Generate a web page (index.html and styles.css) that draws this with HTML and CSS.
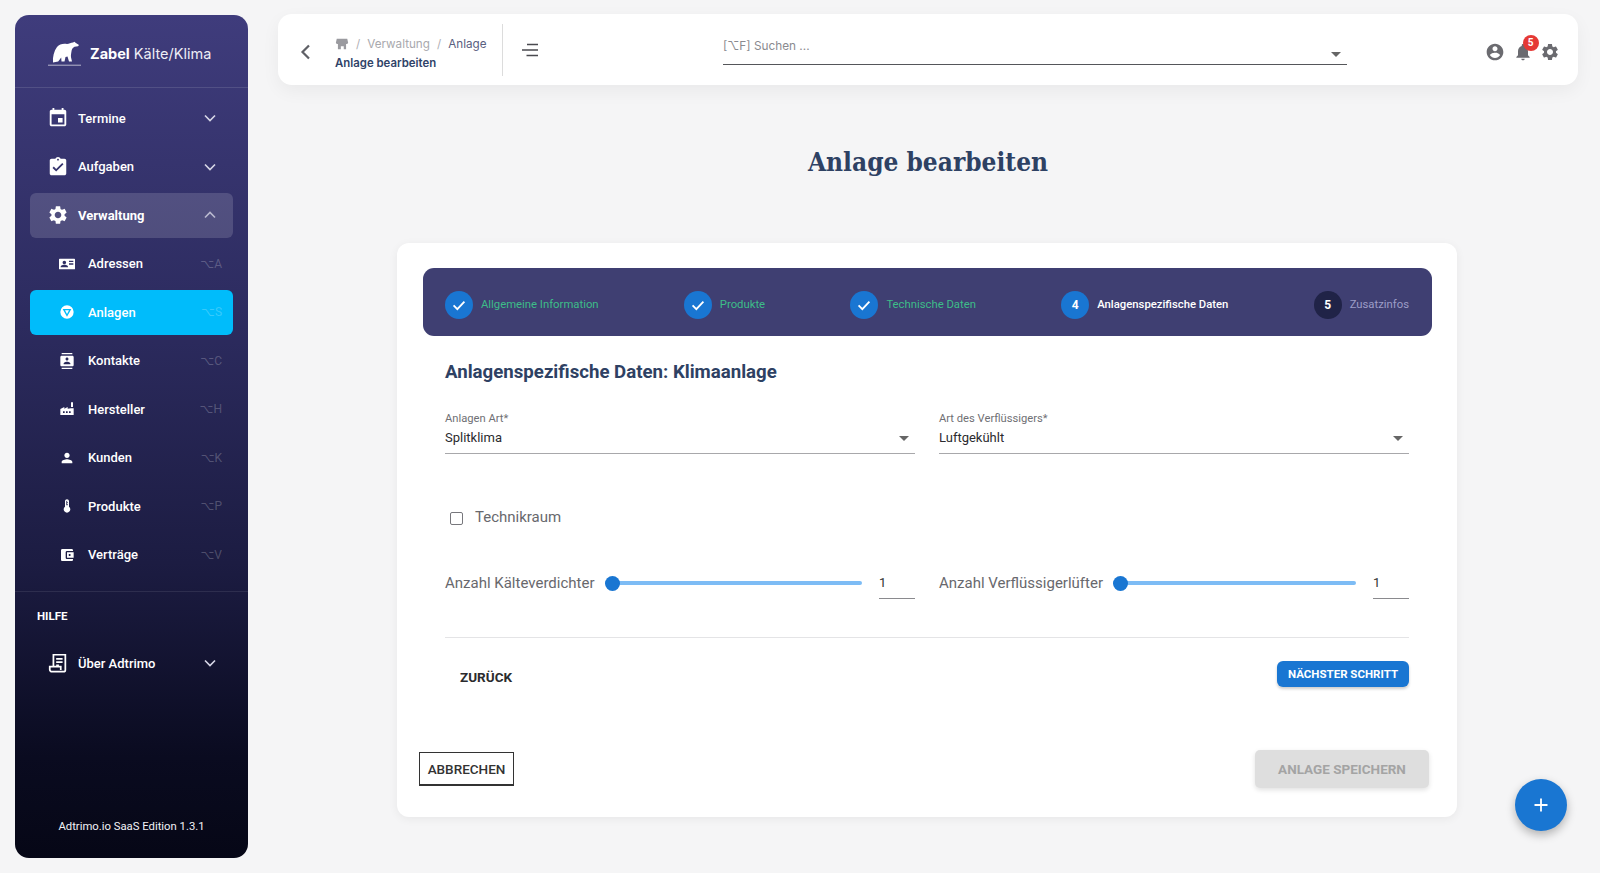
FILE: index.html
```html
<!DOCTYPE html>
<html lang="de">
<head>
<meta charset="utf-8">
<title>Anlage bearbeiten</title>
<link rel="stylesheet" href="styles.css">
</head>
<body>
<svg class="sprite" aria-hidden="true">
  <symbol id="chev-down" viewBox="0 0 24 24"><path d="M6 9l6 6 6-6" fill="none" stroke="currentColor" stroke-width="2"/></symbol>
  <symbol id="chev-up" viewBox="0 0 24 24"><path d="M6 15l6-6 6 6" fill="none" stroke="currentColor" stroke-width="2"/></symbol>
  <symbol id="gear" viewBox="0 0 24 24"><path d="M19.14 12.94c.04-.3.06-.61.06-.94 0-.32-.02-.64-.07-.94l2.03-1.58c.18-.14.23-.41.12-.61l-1.92-3.32c-.12-.22-.37-.29-.59-.22l-2.39.96c-.5-.38-1.03-.7-1.62-.94l-.36-2.54c-.04-.24-.24-.41-.48-.41h-3.84c-.24 0-.43.17-.47.41l-.36 2.54c-.59.24-1.13.57-1.62.94l-2.39-.96c-.22-.08-.47 0-.59.22L2.74 8.87c-.12.21-.08.47.12.61l2.03 1.58c-.05.3-.09.63-.09.94s.02.64.07.94l-2.03 1.58c-.18.14-.23.41-.12.61l1.92 3.32c.12.22.37.29.59.22l2.39-.96c.5.38 1.03.7 1.62.94l.36 2.54c.05.24.24.41.48.41h3.84c.24 0 .44-.17.47-.41l.36-2.54c.59-.24 1.13-.56 1.62-.94l2.39.96c.22.08.47 0 .59-.22l1.92-3.32c.12-.22.07-.47-.12-.61l-2.01-1.58zM12 15.6c-1.98 0-3.6-1.62-3.6-3.6s1.62-3.6 3.6-3.6 3.6 1.62 3.6 3.6-1.62 3.6-3.6 3.6z"/></symbol>
  <symbol id="check" viewBox="0 0 24 24"><path d="M5.5 12.5l4.5 4.5 8.5-9" fill="none" stroke="currentColor" stroke-width="2.2"/></symbol>
</svg>

<div class="app">
  <aside class="sidebar">
    <div class="brand">
      <svg class="bear" viewBox="0 0 34 26"><path d="M5 22.500C4.500 17 6 11 9 7c2.500-3 6-3.500 10-3 2-.3 4-1.500 6-1.500l1.500-.8 1 1 3.500 2.300-1 1.200-3.500.5c-1.500 1-2.500 2-2.800 3.500-.4 2.500-1 5-.7 7l1 4.300h-3l-1.500-5-2 .5-1 4.500h-3l-.3-4-3 4z" fill="#fff"/><path d="M0 25.200h33" stroke="#fff" stroke-width=".8" opacity=".8"/></svg>
      <span class="brand-name"><b>Zabel</b> Kälte/Klima</span>
    </div>
    <nav class="menu">
      <a class="item top"><svg class="ico" viewBox="0 0 24 24"><path d="M17 12h-5v5h5v-5zM16 1v2H8V1H6v2H5c-1.11 0-1.99.9-1.99 2L3 19c0 1.1.89 2 2 2h14c1.1 0 2-.9 2-2V5c0-1.1-.9-2-2-2h-1V1h-2zm3 18H5V8h14v11z"/></svg><span class="lbl">Termine</span><svg class="chev"><use href="#chev-down"/></svg></a>
      <a class="item top"><svg class="ico" viewBox="0 0 24 24"><path d="M19 3h-4.18C14.4 1.84 13.3 1 12 1c-1.3 0-2.4.84-2.82 2H5c-1.1 0-2 .9-2 2v14c0 1.1.9 2 2 2h14c1.1 0 2-.9 2-2V5c0-1.1-.9-2-2-2zm-7 0c.55 0 1 .45 1 1s-.45 1-1 1-1-.45-1-1 .45-1 1-1zm-2 14l-4-4 1.41-1.41L10 14.17l6.59-6.59L18 9l-8 8z"/></svg><span class="lbl">Aufgaben</span><svg class="chev"><use href="#chev-down"/></svg></a>
      <a class="item top open"><svg class="ico"><use href="#gear"/></svg><span class="lbl">Verwaltung</span><svg class="chev"><use href="#chev-up"/></svg></a>
      <a class="item sub"><svg class="ico" viewBox="0 0 24 24"><path fill-rule="evenodd" d="M1 4h22c.6 0 1 .4 1 1v14c0 .6-.4 1-1 1H1c-.6 0-1-.4-1-1V5c0-.6.4-1 1-1zm7 3a2.700 2.700 0 100 5.400A2.700 2.700 0 008 7zm-5.500 10h11v-1c0-2-3.700-2.700-5.500-2.700S2.500 14 2.500 16v1zM15 7v2h6.500V7H15zm0 4v2h6.500v-2H15z"/></svg><span class="lbl">Adressen</span><span class="key">⌥A</span></a>
      <a class="item sub active"><svg class="ico" viewBox="0 0 24 24"><path fill-rule="evenodd" d="M12 2a10 10 0 110 20 10 10 0 010-20zM5.500 7.500L12 19l6.500-11.500zM9 9.500h6L12 15z"/></svg><span class="lbl">Anlagen</span><span class="key">⌥S</span></a>
      <a class="item sub"><svg class="ico" viewBox="0 0 24 24"><path d="M20 0H4v2h16V0zM4 24h16v-2H4v2zM20 4H4c-1.100 0-2 .9-2 2v12c0 1.100.9 2 2 2h16c1.100 0 2-.9 2-2V6c0-1.100-.9-2-2-2zm-8 2.750c1.240 0 2.250 1.010 2.250 2.250s-1.010 2.250-2.250 2.250S9.750 10.240 9.750 9 10.760 6.750 12 6.750zM17 17H7v-1.500c0-1.670 3.330-2.500 5-2.500s5 .83 5 2.500V17z"/></svg><span class="lbl">Kontakte</span><span class="key">⌥C</span></a>
      <a class="item sub"><svg class="ico" viewBox="0 0 24 24"><path fill-rule="evenodd" d="M18 2h3v7h-3zM2 12l6-3v2.500L13 9v2.500l5-.5h4v10H2zm4 3.500v2.500h2.500v-2.500zm4.500 0v2.500H13v-2.500zm4.500 0v2.500h2.500v-2.500z"/></svg><span class="lbl">Hersteller</span><span class="key">⌥H</span></a>
      <a class="item sub"><svg class="ico" viewBox="0 0 24 24"><path d="M12 12c2.210 0 4-1.790 4-4s-1.790-4-4-4-4 1.790-4 4 1.790 4 4 4zm0 2c-2.670 0-8 1.340-8 4v2h16v-2c0-2.660-5.330-4-8-4z"/></svg><span class="lbl">Kunden</span><span class="key">⌥K</span></a>
      <a class="item sub"><svg class="ico" viewBox="0 0 24 24"><path d="M15 13V5c0-1.660-1.340-3-3-3S9 3.340 9 5v8c-1.210.91-2 2.370-2 4 0 2.760 2.240 5 5 5s5-2.240 5-5c0-1.630-.79-3.090-2-4zm-4-8c0-.55.45-1 1-1s1 .45 1 1h-1v1h1v2h-1v1h1v2h-2V5z"/></svg><span class="lbl">Produkte</span><span class="key">⌥P</span></a>
      <a class="item sub"><svg class="ico" viewBox="0 0 24 24"><path d="M21 18v1c0 1.100-.9 2-2 2H5c-1.110 0-2-.9-2-2V5c0-1.100.89-2 2-2h14c1.100 0 2 .9 2 2v1h-9c-1.110 0-2 .9-2 2v8c0 1.100.89 2 2 2h9zm-9-2h10V8H12v8zm4-2.500c-.83 0-1.500-.67-1.500-1.500s.67-1.500 1.500-1.500 1.500.67 1.500 1.500-.67 1.500-1.500 1.500z"/></svg><span class="lbl">Verträge</span><span class="key">⌥V</span></a>
    </nav>
    <div class="help-head">HILFE</div>
    <nav class="menu">
      <a class="item top"><svg class="ico" viewBox="0 0 24 24"><path d="M7 16V3h13v16.500a2 2 0 01-2 2H5.500A2.500 2.500 0 013 19v-3h12v3.500M10 7.500h7M10 11h7M10 14.500h3" fill="none" stroke="#fff" stroke-width="1.900"/></svg><span class="lbl">Über Adtrimo</span><svg class="chev"><use href="#chev-down"/></svg></a>
    </nav>
    <div class="version">Adtrimo.io SaaS Edition 1.3.1</div>
  </aside>

  <main class="main">
    <header class="topbar">
      <svg class="back" viewBox="0 0 24 24"><path d="M15 5.500L8.500 12l6.500 6.500" fill="none" stroke="currentColor" stroke-width="2.200"/></svg>
      <div class="crumbs">
        <div class="trail">
          <svg class="store" viewBox="0 0 24 24"><path d="M3 3h18l1.500 7a3 3 0 01-3.500 2v9h-4v-5h-5v5H5v-9a3 3 0 01-3.500-2z"/></svg>
          <span class="sep">/</span><span class="muted">Verwaltung</span><span class="sep">/</span><span class="cur">Anlage</span>
        </div>
        <div class="crumb-title">Anlage bearbeiten</div>
      </div>
      <svg class="burger" viewBox="0 0 24 24"><path d="M9 6.500h11M4 12h16M8.500 17.500h11.500" fill="none" stroke="currentColor" stroke-width="1.700"/></svg>
      <div class="search"><span>[⌥F] Suchen ...</span><i class="caret"></i></div>
      <div class="tools">
        <svg class="tool" viewBox="0 0 24 24"><path d="M12 2C6.480 2 2 6.480 2 12s4.480 10 10 10 10-4.480 10-10S17.520 2 12 2zm0 3c1.660 0 3 1.340 3 3s-1.340 3-3 3-3-1.340-3-3 1.340-3 3-3zm0 14.200c-2.500 0-4.710-1.280-6-3.220.03-1.990 4-3.080 6-3.080 1.990 0 5.970 1.090 6 3.080-1.290 1.940-3.500 3.220-6 3.220z"/></svg>
        <span class="bell">
          <svg class="tool" viewBox="0 0 24 24"><path d="M12 22c1.100 0 2-.9 2-2h-4c0 1.100.89 2 2 2zm6-6v-5c0-3.070-1.640-5.640-4.500-6.320V4c0-.83-.67-1.500-1.500-1.500s-1.500.67-1.500 1.500v.68C7.630 5.360 6 7.920 6 11v5l-2 2v1h16v-1l-2-2z"/></svg>
          <b class="badge">5</b>
        </span>
        <svg class="tool"><use href="#gear"/></svg>
      </div>
    </header>

    <h1 class="page-title">Anlage bearbeiten</h1>

    <section class="card">
      <ol class="stepper">
        <li class="step done"><span class="dot"><svg><use href="#check"/></svg></span>Allgemeine Information</li>
        <li class="step done"><span class="dot"><svg><use href="#check"/></svg></span>Produkte</li>
        <li class="step done"><span class="dot"><svg><use href="#check"/></svg></span>Technische Daten</li>
        <li class="step now"><span class="dot">4</span>Anlagenspezifische Daten</li>
        <li class="step next"><span class="dot">5</span>Zusatzinfos</li>
      </ol>

      <div class="form">
        <h2 class="form-title">Anlagenspezifische Daten: Klimaanlage</h2>
        <div class="cols">
          <div class="field">
            <label class="field-label">Anlagen Art*</label>
            <div class="select">Splitklima<i class="caret"></i></div>
          </div>
          <div class="field">
            <label class="field-label">Art des Verflüssigers*</label>
            <div class="select">Luftgekühlt<i class="caret"></i></div>
          </div>
        </div>
        <div class="check-row"><span class="box"></span>Technikraum</div>
        <div class="cols sliders">
          <div class="slider-row">
            <span class="slider-label">Anzahl Kälteverdichter</span>
            <span class="track"><i class="thumb"></i></span>
            <span class="num">1</span>
          </div>
          <div class="slider-row">
            <span class="slider-label">Anzahl Verflüssigerlüfter</span>
            <span class="track"><i class="thumb"></i></span>
            <span class="num">1</span>
          </div>
        </div>
        <hr class="rule">
        <div class="nav-row">
          <button class="btn-text">ZURÜCK</button>
          <button class="btn-next">NÄCHSTER SCHRITT</button>
        </div>
      </div>

      <div class="card-foot">
        <button class="btn-cancel">ABBRECHEN</button>
        <button class="btn-save">ANLAGE SPEICHERN</button>
      </div>
    </section>
  </main>
</div>
<button class="fab" aria-label="Neu"><svg viewBox="0 0 24 24"><path d="M12 5.500v13M5.500 12h13" fill="none" stroke="#fff" stroke-width="1.800"/></svg></button>
</body>
</html>
```
FILE: styles.css
```css
* { box-sizing: border-box; }
html, body { margin: 0; height: 873px; overflow: hidden; }
body { background: #f5f5f6; font-family: Roboto, "Liberation Sans", sans-serif; color: #333; }
.sprite { display: none; }
.app { display: flex; align-items: flex-start; padding: 15px 22px 0 15px; }

/* sidebar */
.sidebar { flex: none; width: 233px; height: 843px; border-radius: 14px; background: linear-gradient(180deg, #3f3c7c 0%, #2d2c60 35%, #1c1c42 65%, #0a0b20 88%, #060716 100%); color: #fff; display: flex; flex-direction: column; position: relative; }
.brand { height: 73px; border-bottom: 1px solid rgba(255,255,255,.12); display: flex; align-items: center; padding: 4px 0 0 33px; flex: none; }
.bear { width: 34px; height: 26px; flex: none; }
.brand-name { font-family: Inter, Roboto, sans-serif; font-size: 14.500px; margin-left: 8px; color: #eeeef6; white-space: nowrap; }
.brand-name b { color: #fff; font-weight: 700; }
.menu { display: flex; flex-direction: column; gap: 3.500px; padding: 7.500px 15px 0; }
.item { height: 45px; display: flex; align-items: center; border-radius: 6px; font-size: 13px; font-weight: 500; color: #fff; flex: none; }
.item .ico { fill: #fff; flex: none; }
.top .ico { width: 22px; height: 22px; margin-left: 16.500px; }
.top .lbl { margin-left: 9.500px; flex: 1; }
.chev { width: 20px; height: 20px; margin-right: 13px; color: #d6d6e6; flex: none; }
.open { background: rgba(255,255,255,.15); font-weight: 700; }
.open .chev { color: #b9b9cf; }
.sub .ico { width: 16px; height: 16px; margin-left: 29px; }
.sub .lbl { margin-left: 13px; flex: 1; }
.key { margin-right: 11px; font-family: Roboto, "DejaVu Sans", sans-serif; font-size: 12px; font-weight: 400; color: rgba(255,255,255,.22); }
.active { background: #00bcfb; }
.help-head { margin-top: 13.500px; padding: 17px 0 0 22px; border-top: 1px solid rgba(255,255,255,.09); font-size: 11.500px; font-weight: 700; line-height: 14px; }
.help-head + .menu { padding-top: 18px; }
.version { margin-top: auto; padding-bottom: 25px; text-align: center; font-size: 11.300px; color: #f2f2f6; }

/* main */
.main { flex: 1; padding-left: 30px; margin-top: -1px; min-width: 0; }
.topbar { height: 71px; background: #fff; border-radius: 14px; box-shadow: 0 6px 18px rgba(0,0,0,.05); display: flex; align-items: center; padding-left: 16px; }
.back { width: 24px; height: 24px; color: #5f6066; flex: none; margin-top: 5px; }
.crumbs { margin-left: 17px; width: 168px; height: 52px; flex: none; font-family: Inter, Roboto, sans-serif; font-size: 11.700px; border-right: 1px solid #dcdcdc; display: flex; flex-direction: column; justify-content: center; margin-top: 1px; gap: 3px; padding: 6px 15px 0 0; }
.trail { display: flex; align-items: center; height: 16px; white-space: nowrap; }
.store { width: 14px; height: 14px; fill: #9a9a9f; flex: none; }
.sep { color: #b0b0b5; margin: 0 7px; }
.muted { color: #a9a9ae; }
.cur { color: #5a6080; }
.crumb-title { color: #2f4368; font-weight: 600; font-size: 11.400px; line-height: 16px; white-space: nowrap; }
.burger { width: 24px; height: 24px; color: #4a4a4f; flex: none; margin-left: 15px; }
.search { width: 624px; margin-left: 181px; flex: none; position: relative; font-size: 11.800px; color: #8a8a8f; line-height: 18px; padding-bottom: 9px; margin-top: 2px; border-bottom: 1px solid #55565a; font-family: Inter, Roboto, sans-serif; }
.caret { position: absolute; width: 0; height: 0; border-left: 5px solid transparent; border-right: 5px solid transparent; border-top: 5px solid #666; }
.search .caret { right: 6px; top: 15px; }
.tools { margin-left: auto; padding-right: 18px; display: flex; align-items: center; gap: 7.500px; margin-top: 5px; }
.tool { width: 20px; height: 20px; fill: #6b6b70; display: block; }
.bell { position: relative; display: block; }
.badge { position: absolute; left: 10px; top: -7px; width: 16px; height: 16px; border-radius: 50%; background: #e53935; color: #fff; font-size: 10px; line-height: 16px; text-align: center; font-weight: 700; }

.page-title { margin: 57px 0 0; text-align: center; font-family: "DejaVu Serif", "Liberation Serif", serif; font-stretch: condensed; font-size: 26px; font-weight: 700; line-height: 40px; color: #2e4163; }

.card { width: 1060px; margin: 61px 0 0 119px; background: #fff; border-radius: 12px; padding: 25px 28px 29px 22px; box-shadow: 0 2px 10px rgba(0,0,0,.06); }
.stepper { list-style: none; margin: 0 -3px 0 4px; height: 68px; background: #3f3f72; border-radius: 11px; display: flex; justify-content: space-between; align-items: center; padding: 5px 23px 0 22px; font-size: 11.300px; }
.step { display: flex; align-items: center; gap: 8px; white-space: nowrap; }
.dot { width: 28px; height: 28px; border-radius: 50%; display: flex; align-items: center; justify-content: center; color: #fff; font-weight: 700; font-size: 12px; background: #1976d2; }
.dot svg { width: 20px; height: 20px; }
.done { color: #3dbd88; }
.now { color: #fff; font-weight: 500; }
.next { color: #9d9dc7; }
.next .dot { background: #202347; }

.form { padding: 24px 0 0 26px; margin-right: 20px; }
.form-title { margin: 0; font-size: 18.650px; line-height: 24px; font-weight: 700; color: #2e4163; }
.cols { display: grid; grid-template-columns: 470px 470px; column-gap: 24px; margin-top: 28px; }
.field-label { display: block; font-size: 11.200px; line-height: 14px; color: #6f6f74; margin-bottom: 2px; }
.select { position: relative; font-size: 13px; line-height: 20px; color: #2b2b2e; padding-bottom: 5px; border-bottom: 1px solid #a8a8ab; }
.select .caret { right: 6px; top: 8px; }
.check-row { display: flex; align-items: center; height: 24px; margin-top: 51px; font-size: 15px; color: #68686d; padding-left: 5px; }
.box { width: 13px; height: 13px; border: 1.500px solid #77777c; border-radius: 2px; margin: 2px 12px 0 0; flex: none; }
.sliders { margin-top: 39px; }
.slider-row { display: flex; align-items: center; height: 30px; }
.slider-label { font-size: 15px; color: #68686d; white-space: nowrap; flex: none; }
.track { flex: 1; height: 4px; background: #7dbcf5; margin: 0 17px 0 10px; position: relative; border-radius: 2px; }
.thumb { position: absolute; left: 0; top: -5.500px; width: 15px; height: 15px; border-radius: 50%; background: #1976d2; }
.num { width: 36px; height: 32px; flex: none; border-bottom: 1px solid #8a8a8e; font-size: 13px; line-height: 32px; color: #333; }
.rule { margin: 39px 0 0; border: 0; border-top: 1px solid #e4e4e6; width: 964px; }
.nav-row { display: flex; justify-content: space-between; align-items: flex-start; width: 964px; margin-top: 23px; }
button { font-family: Roboto, sans-serif; cursor: pointer; }
.btn-text { height: 32px; padding: 0 15px; background: none; border: 0; font-size: 13.500px; font-weight: 700; color: #2b2b2e; }
.btn-next { height: 26px; width: 132px; padding: 0; background: #1976d2; color: #fff; border: 0; border-radius: 6px; font-size: 11.500px; font-weight: 700; box-shadow: 0 2px 3px rgba(0,0,0,.2); }
.card-foot { display: flex; justify-content: space-between; align-items: flex-start; margin-top: 57px; }
.btn-cancel { margin-top: 2px; height: 34px; width: 95px; padding: 0; background: #fff; border: 1px solid #333; border-bottom-width: 2px; font-size: 13.500px; font-weight: 500; color: #333; }
.btn-save { height: 38px; width: 174px; padding: 0; background: #dedede; border: 0; border-radius: 5px; font-size: 13.500px; font-weight: 700; color: #a4a4a4; box-shadow: 0 2px 5px rgba(0,0,0,.12); }

.fab { position: fixed; left: 1515px; top: 779px; width: 52px; height: 52px; border-radius: 50%; background: #1976d2; border: 0; padding: 14px; box-shadow: 0 4px 10px rgba(0,0,0,.28); }
.fab svg { display: block; width: 24px; height: 24px; }
```
